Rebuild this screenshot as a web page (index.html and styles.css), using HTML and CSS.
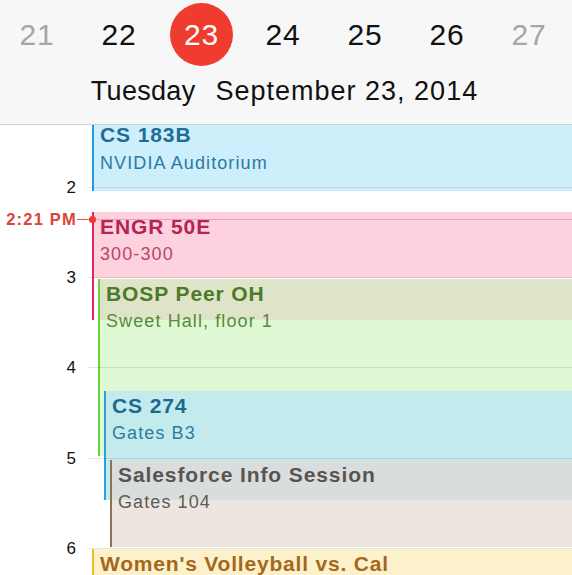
FILE: index.html
```html
<!DOCTYPE html>
<html>
<head>
<meta charset="utf-8">
<link rel="stylesheet" href="styles.css">
</head>
<body>
<div class="app">
  <header class="header">
    <div class="days">
      <div class="day muted">21</div>
      <div class="day">22</div>
      <div class="day"><span class="today">23</span></div>
      <div class="day">24</div>
      <div class="day">25</div>
      <div class="day">26</div>
      <div class="day muted">27</div>
    </div>
    <div class="date-line">
      <span class="weekday">Tuesday</span>
      <span class="full-date">September 23, 2014</span>
    </div>
  </header>
  <main class="grid">
    <div class="events">
      <div class="event ev-blue ev-cont" style="top:0;height:66px">
        <div class="ev-title">CS 183B</div>
        <div class="ev-sub">NVIDIA Auditorium</div>
      </div>
      <div class="event ev-pink" style="top:87px;height:108px">
        <div class="ev-title">ENGR 50E</div>
        <div class="ev-sub">300-300</div>
      </div>
      <div class="event ev-green" style="top:154px;height:177px">
        <div class="ev-title">BOSP Peer OH</div>
        <div class="ev-sub">Sweet Hall, floor 1</div>
      </div>
      <div class="event ev-teal" style="top:266px;height:109px">
        <div class="ev-title">CS 274</div>
        <div class="ev-sub">Gates B3</div>
      </div>
      <div class="event ev-brown" style="top:335px;height:87px">
        <div class="ev-title">Salesforce Info Session</div>
        <div class="ev-sub">Gates 104</div>
      </div>
      <div class="event ev-yellow" style="top:424px;height:60px">
        <div class="ev-title">Women's Volleyball vs. Cal</div>
      </div>
      <div class="now">
        <span class="now-label">2:21 PM</span>
        <span class="now-tick"></span>
        <span class="now-dot"></span>
        <span class="now-line"></span>
      </div>
    </div>
    <div class="hours">
      <div class="hour"><span class="hour-label">2</span><span class="hour-line"></span></div>
      <div class="hour"><span class="hour-label">3</span><span class="hour-line"></span></div>
      <div class="hour"><span class="hour-label">4</span><span class="hour-line"></span></div>
      <div class="hour"><span class="hour-label">5</span><span class="hour-line"></span></div>
      <div class="hour"><span class="hour-label">6</span><span class="hour-line"></span></div>
    </div>
  </main>
</div>
</body>
</html>
```
FILE: styles.css
```css
* { box-sizing: border-box; }
html, body { margin: 0; padding: 0; background: #fff; }
body {
  font-family: "Liberation Sans", Arial, Helvetica, sans-serif;
  color: #000;
  width: 572px;
  height: 575px;
  overflow: hidden;
}
.app { display: flex; flex-direction: column; height: 575px; }

.header {
  background: #f7f7f7;
  height: 125px;
  border-bottom: 1px solid #cfd3d6;
  display: flex;
  flex-direction: column;
}
.days {
  display: grid;
  grid-template-columns: repeat(7, 82px);
  margin-left: -4px;
  margin-top: 3px;
  height: 63px;
}
.day {
  display: flex;
  align-items: center;
  justify-content: center;
  font-size: 30px;
  letter-spacing: 0.9px;
  line-height: 63px;
  color: #111;
}
.day.muted { color: #a6a6a6; }
.today {
  width: 63px;
  height: 63px;
  border-radius: 50%;
  background: #f03b2f;
  color: #fff;
  display: flex;
  align-items: center;
  justify-content: center;
  margin-left: 1px;
}
.date-line {
  display: flex;
  justify-content: center;
  gap: 20px;
  margin-top: 9px;
  margin-left: -3px;
  font-size: 27px;
  line-height: 32px;
  color: #111;
}
.weekday { letter-spacing: 0.3px; }
.full-date { letter-spacing: 1px; }

.grid {
  position: relative;
  flex: 1;
  overflow: hidden;
}
.hours {
  position: relative;
  z-index: 2;
  padding-top: 62px;
}
.hour {
  height: 90.2px;
  display: flex;
  align-items: flex-start;
}
.hour-label {
  width: 76px;
  text-align: right;
  font-size: 17px;
  line-height: 20px;
  color: #111;
  transform: translateY(-9px);
}
.hour-line {
  flex: 1;
  margin-left: 12px;
  border-top: 1px solid rgba(0, 0, 0, 0.1);
}

.events {
  position: absolute;
  inset: 0;
  z-index: 1;
}
.event {
  position: absolute;
  right: 0;
  left: 92px;
  border-left: 2px solid;
  padding-left: 6px;
  overflow: hidden;
  white-space: nowrap;
}
.ev-title {
  font-size: 21px;
  font-weight: bold;
  letter-spacing: 0.9px;
  line-height: 25px;
  padding-top: 2px;
}
.ev-sub {
  font-size: 18px;
  letter-spacing: 1.1px;
  line-height: 30px;
}
.ev-cont .ev-title { padding-top: 0; line-height: 19px; }
.ev-cont .ev-sub { margin-top: 4px; }

.ev-blue { border-color: #1e9be0; background: #cdeefb; color: #1f6d97; }
.ev-blue .ev-sub { color: #2c79a3; }

.ev-pink {
  border-color: #e2265c;
  background: linear-gradient(#fdd1de 0 66px, transparent 66px);
  color: #b32452;
}
.ev-pink .ev-sub { color: #b8466a; }

.ev-green {
  left: 98px;
  border-color: #66d340;
  background: linear-gradient(#dfe3c8 0 41px, #dff9d5 41px);
  color: #4b7a29;
}
.ev-green .ev-sub { color: #5a8a3b; }

.ev-teal {
  left: 104px;
  border-color: #2f9fdc;
  background: #c3ebee;
  color: #1d6a8e;
}
.ev-teal .ev-sub { color: #2f7b9e; }

.ev-brown {
  left: 110px;
  border-color: #8c7157;
  background: linear-gradient(#d9dddd 0 40px, #ece5e0 40px);
  color: #5a544f;
}
.ev-brown .ev-sub { color: #625a53; }

.ev-yellow {
  border-color: #f4be20;
  background: #fdf1cc;
  color: #a5681b;
}
.ev-yellow .ev-title { letter-spacing: 0.8px; }

.now {
  position: absolute;
  left: 0;
  right: 0;
  top: 84px;
  height: 20px;
  display: flex;
  align-items: center;
  z-index: 3;
}
.now-label {
  width: 77px;
  text-align: right;
  font-size: 16.5px;
  font-weight: bold;
  letter-spacing: 1.2px;
  color: #dc4339;
}
.now-tick {
  width: 12px;
  height: 1px;
  background: #e8554a;
}
.now-dot {
  width: 7px;
  height: 7px;
  border-radius: 50%;
  background: #f0392d;
}
.now-line {
  flex: 1;
  height: 1px;
  background: rgba(200, 40, 80, 0.3);
}
```
